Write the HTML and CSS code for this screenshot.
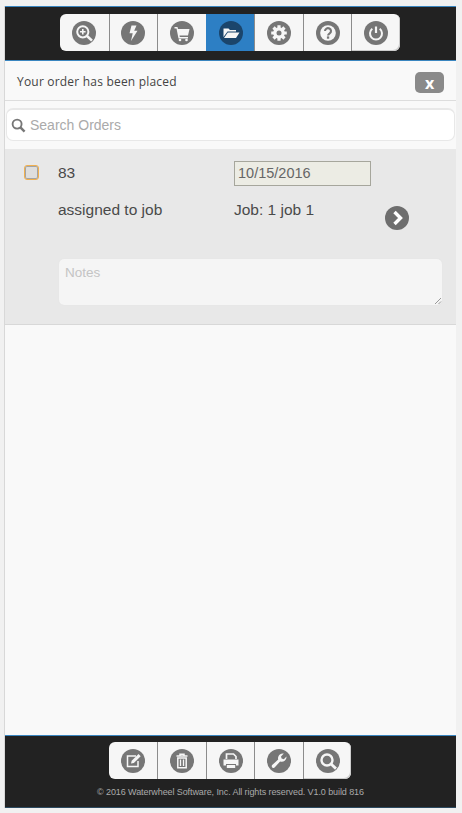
FILE: index.html
```html
<!DOCTYPE html>
<html lang="en">
<head>
<meta charset="utf-8">
<title>Orders</title>
<link rel="stylesheet" href="styles.css">
</head>
<body>
<div class="app">
  <header class="bar top">
    <nav class="btns">
      <a class="btn"><svg class="ico" viewBox="0 0 24 24"><circle cx="12" cy="12" r="12"/><circle cx="10.800" cy="10.800" r="5.600" fill="none" stroke="#f6f6f6" stroke-width="2"/><path d="M15 15l5 4.600" stroke="#f6f6f6" stroke-width="2.600" fill="none"/><path d="M8 10.800h5.600M10.800 8v5.600" stroke="#f6f6f6" stroke-width="1.600"/></svg></a>
      <a class="btn"><svg class="ico" viewBox="0 0 24 24"><circle cx="12" cy="12" r="12"/><path d="M10.500 4.500h5l-2.300 5.200h3.300L10 20l1.700-7.800H8.500z" fill="#f6f6f6"/></svg></a>
      <a class="btn"><svg class="ico" viewBox="0 0 24 24"><circle cx="12" cy="12" r="12"/><path d="M4.500 6h3l.5 2h11.500l-1.500 6.500H9.500l.3 1.500h8.200v1.500H8.500L6.500 7.500h-2z" fill="#f6f6f6"/><circle cx="10" cy="19" r="1.300" fill="#f6f6f6"/><circle cx="16.500" cy="19" r="1.300" fill="#f6f6f6"/></svg></a>
      <a class="btn on"><svg class="ico" viewBox="0 0 24 24"><circle cx="12" cy="12" r="12"/><path d="M4.500 16V7.500h5l1.500 1.500h6v1.500H8.500z" fill="#f6f6f6"/><path d="M8.800 11.500H20.500L17 17H5z" fill="#f6f6f6"/></svg></a>
      <a class="btn"><svg class="ico" viewBox="0 0 24 24"><circle cx="12" cy="12" r="12"/><circle cx="12" cy="12" r="5.800" fill="#f6f6f6"/><path d="M12 4.200v15.600M4.200 12h15.600M6.500 6.500l11 11M17.500 6.500l-11 11" stroke="#f6f6f6" stroke-width="3.200"/><circle cx="12" cy="12" r="2.500" fill="#767676"/></svg></a>
      <a class="btn"><svg class="ico" viewBox="0 0 24 24"><circle cx="12" cy="12" r="12"/><circle cx="12" cy="12" r="7.800" fill="#f6f6f6"/><path d="M9 10a3 2.800 0 1 1 4.700 2.300c-1.100.7-1.600 1.100-1.600 2.100" fill="none" stroke="#767676" stroke-width="2.100"/><rect x="10.900" y="15.400" width="2.300" height="2.300" fill="#767676"/></svg></a>
      <a class="btn"><svg class="ico" viewBox="0 0 24 24"><circle cx="12" cy="12" r="12"/><path d="M8.300 7.800a6 6 0 1 0 7.400 0" fill="none" stroke="#f6f6f6" stroke-width="2"/><path d="M12 5.500v6.500" stroke="#f6f6f6" stroke-width="2.200"/></svg></a>
    </nav>
  </header>

  <div class="msg">
    <span class="msg-text">Your order has been placed</span>
    <button class="close">x</button>
  </div>

  <div class="search">
    <svg class="search-ico" viewBox="0 0 16 16"><circle cx="6.500" cy="6.500" r="4.800" fill="none" stroke="#777" stroke-width="2"/><path d="M10 10l4.500 4.500" stroke="#777" stroke-width="2.600"/></svg>
    <span class="search-ph">Search Orders</span>
  </div>

  <section class="card">
    <div class="row row-a">
      <span class="check-col"><span class="check"></span></span>
      <span class="col-1">83</span>
      <span class="date">10/15/2016</span>
    </div>
    <div class="row row-b">
      <span class="check-col"></span>
      <span class="col-1">assigned to job</span>
      <span class="col-2">Job: 1 job 1</span>
      <svg class="go" viewBox="0 0 24 24"><circle cx="12" cy="12" r="12" fill="#6e6e6e"/><path d="M9.500 6l6 6-6 6" fill="none" stroke="#fff" stroke-width="3.400"/></svg>
    </div>
    <div class="notes">
      <span class="notes-ph">Notes</span>
      <svg class="grip" viewBox="0 0 8 8"><path d="M1 7l6-6M4.500 7l2.500-2.500" stroke="#999" stroke-width="1" fill="none"/></svg>
    </div>
  </section>

  <main class="fill"></main>

  <footer class="bar bottom">
    <nav class="btns">
      <a class="btn"><svg class="ico" viewBox="0 0 24 24"><circle cx="12" cy="12" r="12"/><path d="M15 7H6.500v10.500H17V12" fill="none" stroke="#f6f6f6" stroke-width="1.500"/><path d="M10 14.500l.7-2.800 6.800-6.700 2.200 2.200-6.800 6.700z" fill="#f6f6f6"/></svg></a>
      <a class="btn"><svg class="ico" viewBox="0 0 24 24"><circle cx="12" cy="12" r="12"/><path d="M6.500 7h11M10 7V5.300h4V7" fill="none" stroke="#f6f6f6" stroke-width="1.500"/><path d="M7.800 9h8.400v9.700H7.800z" fill="none" stroke="#f6f6f6" stroke-width="1.500"/><path d="M10.500 10.500v6.500M13.500 10.500v6.500" stroke="#f6f6f6" stroke-width="1.300"/></svg></a>
      <a class="btn"><svg class="ico" viewBox="0 0 24 24"><circle cx="12" cy="12" r="12"/><path d="M7.500 10V5h7l2.500 2.500V10" fill="none" stroke="#f6f6f6" stroke-width="1.700"/><path d="M4.500 10.500h15v6H17V15H7v1.500H4.500z" fill="#f6f6f6"/><path d="M7.800 16h8.400v3H7.800z" fill="#f6f6f6"/></svg></a>
      <a class="btn"><svg class="ico" viewBox="0 0 24 24"><circle cx="12" cy="12" r="12"/><path d="M19.500 7.500a4.800 4.800 0 0 1-6.400 5L7.600 18.600a1.800 1.800 0 0 1-2.500-2.500l6.100-5.500a4.800 4.800 0 0 1 5.600-6l-2.800 2.800.6 2.200 2.200.6z" fill="#f6f6f6"/></svg></a>
      <a class="btn"><svg class="ico" viewBox="0 0 24 24"><circle cx="12" cy="12" r="12"/><circle cx="11" cy="11" r="5.500" fill="none" stroke="#f6f6f6" stroke-width="2.400"/><path d="M15 15l5 4.600" stroke="#f6f6f6" stroke-width="2.800"/></svg></a>
    </nav>
    <p class="copy">© 2016 Waterwheel Software, Inc. All rights reserved. V1.0 build 816</p>
  </footer>
</div>
</body>
</html>
```
FILE: styles.css
```css
* { box-sizing: border-box; }
html, body { height: 100%; }
body {
  margin: 0;
  padding: 6px 6px 5px 4px;
  background: #f1f1f1;
  font-family: "Liberation Sans", Arial, sans-serif;
  color: #444;
}
.app {
  height: 802px;
  display: flex;
  flex-direction: column;
  background: #f9f9f9;
  border-left: 1px solid #d8d8d8;
}
.bar { background: #222; border-style: solid; border-color: #3a86c0; }
.top { height: 55px; padding-top: 7px; border-width: 1px 0; }
.bottom { height: 73px; padding-top: 6px; border-width: 1px 0; border-bottom-color: #2c4a60; }
.btns { display: flex; justify-content: center; padding-right: 1px; }
.btn {
  width: 48.600px;
  height: 37px;
  display: flex;
  align-items: center;
  justify-content: center;
  background: #f6f6f6;
  border-left: 1px solid #8c8c8c;
  fill: #767676;
}
.btn:first-child { border-left: 0; border-radius: 6px 0 0 6px; }
.btn:last-child { border-radius: 0 6px 6px 0; box-shadow: inset -1px -1px 0 #ccc; }
.btn.on { background: #2d7fc4; border-left-color: #2d7fc4; fill: #1b456b; }
.ico { width: 24px; height: 24px; display: block; }
.msg {
  height: 40px;
  display: flex;
  align-items: center;
  justify-content: space-between;
  padding: 1px 12px 0 12px;
  border-bottom: 1px solid #ddd;
}
.msg-text {
  font: 12px "Open Sans", sans-serif;
  letter-spacing: .2px;
  color: #444;
}
.close {
  width: 29px;
  height: 21px;
  padding: 0 0 2px;
  border: 0;
  border-radius: 5px;
  background: #8a8a8a;
  color: #fff;
  font: 700 16px "Open Sans", sans-serif;
  margin-top: 2px;
}
.search {
  margin: 7px 1px 8px 1px;
  height: 33px;
  display: flex;
  align-items: center;
  gap: 4px;
  padding-left: 4px;
  background: #fff;
  border: 1px solid #e8e8e8;
  border-top-width: 2px;
  border-radius: 7px;
}
.search-ico { width: 15px; height: 15px; }
.search-ph { font-size: 14px; color: #aaa; }
.card {
  height: 176px;
  background: #e8e8e8;
  border-bottom: 1px solid #d8d8d8;
  padding-top: 12px;
  display: flex;
  flex-direction: column;
}
.row { display: flex; align-items: center; }
.row-a { height: 24px; }
.row-b { height: 24px; margin-top: 13px; }
.check-col { width: 53px; padding-left: 19px; }
.check {
  display: block;
  width: 15px;
  height: 15px;
  border: 1px solid #f0b050;
  border-radius: 3px;
  background: #dedede;
  box-shadow: inset 0 0 0 1px #a4a4a4;
  margin-top: -1px;
}
.col-1 { width: 176px; font-size: 15.500px; color: #4a4a4a; }
.col-2 { width: 151px; font-size: 15.500px; color: #4a4a4a; }
.date {
  width: 137px;
  height: 25px;
  line-height: 23px;
  padding-left: 3px;
  background: #ecece4;
  border: 1px solid #a6a69c;
  font-size: 14.500px;
  color: #666;
  margin-top: 1px;
}
.go { width: 24px; height: 24px; margin-top: 15px; flex: none; }
.notes {
  position: relative;
  margin: 37px 14px 0 54px;
  height: 46px;
  background: #f5f5f5;
  border-radius: 5px;
  padding: 6px;
  box-shadow: 0 0 1px #ddd;
}
.notes-ph { font-size: 13.500px; color: #c4c4c4; display: block; }
.grip { position: absolute; right: 0; bottom: 0; width: 8px; height: 8px; }
.fill { flex: 1; }
.copy {
  margin: 8px 0 0;
  text-align: center;
  font-size: 9px;
  letter-spacing: -.09px;
  color: #aaa;
}
```
